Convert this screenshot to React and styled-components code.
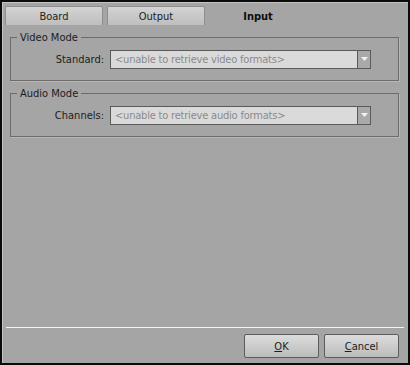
import React from 'react';
import styled, {createGlobalStyle} from 'styled-components';

const Global = createGlobalStyle`
    html, body {
        margin: 0;
        padding: 0;
        background: #a5a5a5;
    }
    * {
        box-sizing: border-box;
    }
`;

const Frame = styled.div`
    width: 410px;
    height: 365px;
    border: 2px solid #0b0b0b;
    background: #a5a5a5;
    display: flex;
    flex-direction: column;
    padding: 0 9px 5px 8px;
    font-family: "DejaVu Sans Condensed", "Liberation Sans", sans-serif;
    font-size: 11px;
    color: #1c1c1c;
    box-shadow: inset 1px 1px 0 #c4c4c4;
`;

const TabBar = styled.div`
    display: flex;
    gap: 4px;
    margin: 4px 0 0 -5px;
`;

const Tab = styled.div`
    width: 98px;
    height: 19px;
    display: flex;
    align-items: center;
    justify-content: center;
    border: ${props => props.active ? '1px solid transparent' : '1px solid #8e8e8e'};
    border-bottom: none;
    border-radius: 2px 2px 0 0;
    background: ${props => props.active ? 'transparent' : 'linear-gradient(#d3d3d3, #bebebe)'};
    font-weight: ${props => props.active ? 700 : 400};
    color: ${props => props.active ? '#0e0e0e' : '#222'};
`;

const Groups = styled.div`
    display: flex;
    flex-direction: column;
    gap: 6px;
    margin-top: 6px;
`;

const Group = styled.fieldset`
    margin: 0;
    min-width: 0;
    padding: 6px 0 11px 0;
    border: 1px solid #6c6c6c;
    box-shadow: 1px 1px 0 #b8b8b8;
`;

const Legend = styled.legend`
    margin-left: 6px;
    padding: 0 3px;
    line-height: 13px;
    color: #1c1c1c;
`;

const Row = styled.div`
    display: grid;
    grid-template-columns: 93px 261px;
    gap: 6px;
    align-items: center;
`;

const Label = styled.span`
    text-align: right;
`;

const Select = styled.div`
    height: 19px;
    display: flex;
    border: 1px solid #5a5a5a;
    background: #dadada;
`;

const SelectText = styled.span`
    flex: 1;
    padding-left: 4px;
    line-height: 17px;
    letter-spacing: -0.2px;
    color: #8a8a8a;
    white-space: nowrap;
    overflow: hidden;
`;

const Arrow = styled.span`
    width: 13px;
    display: flex;
    align-items: center;
    justify-content: center;
    border-left: 1px solid #5a5a5a;
    background: #a9a9a9;
`;

const Footer = styled.div`
    margin-top: auto;
    margin-left: -4px;
    margin-right: -5px;
    display: flex;
    flex-direction: column;
`;

const Separator = styled.div`
    height: 1px;
    background: #f4f4f4;
`;

const Buttons = styled.div`
    display: flex;
    justify-content: flex-end;
    gap: 5px;
    padding: 6px 5px 0 0;
`;

const Button = styled.button`
    width: 75px;
    height: 24px;
    border: 1px solid #5b5b5b;
    border-radius: 2px;
    background: linear-gradient(#dcdcdc, #bcbcbc);
    font: inherit;
    color: #1c1c1c;
    padding: 0;
    u {
        text-decoration: underline;
    }
`;

const ArrowIcon = () => (
    <svg width="7" height="5" viewBox="0 0 7 5">
        <path d="M0 0 L7 0 L3.5 4 Z" fill="#f2f2f2"/>
    </svg>
);

const FormatSelect = ({label, text}) => (
    <Row>
        <Label>{label}</Label>
        <Select>
            <SelectText>{text}</SelectText>
            <Arrow><ArrowIcon/></Arrow>
        </Select>
    </Row>
);

const App = () => {
    return (
        <Frame>
            <Global/>
            <TabBar>
                <Tab>Board</Tab>
                <Tab>Output</Tab>
                <Tab active>Input</Tab>
            </TabBar>
            <Groups>
                <Group>
                    <Legend>Video Mode</Legend>
                    <FormatSelect label="Standard:" text="<unable to retrieve video formats>"/>
                </Group>
                <Group>
                    <Legend>Audio Mode</Legend>
                    <FormatSelect label="Channels:" text="<unable to retrieve audio formats>"/>
                </Group>
            </Groups>
            <Footer>
                <Separator/>
                <Buttons>
                    <Button><u>O</u>K</Button>
                    <Button><u>C</u>ancel</Button>
                </Buttons>
            </Footer>
        </Frame>
    );
};

export default App;
